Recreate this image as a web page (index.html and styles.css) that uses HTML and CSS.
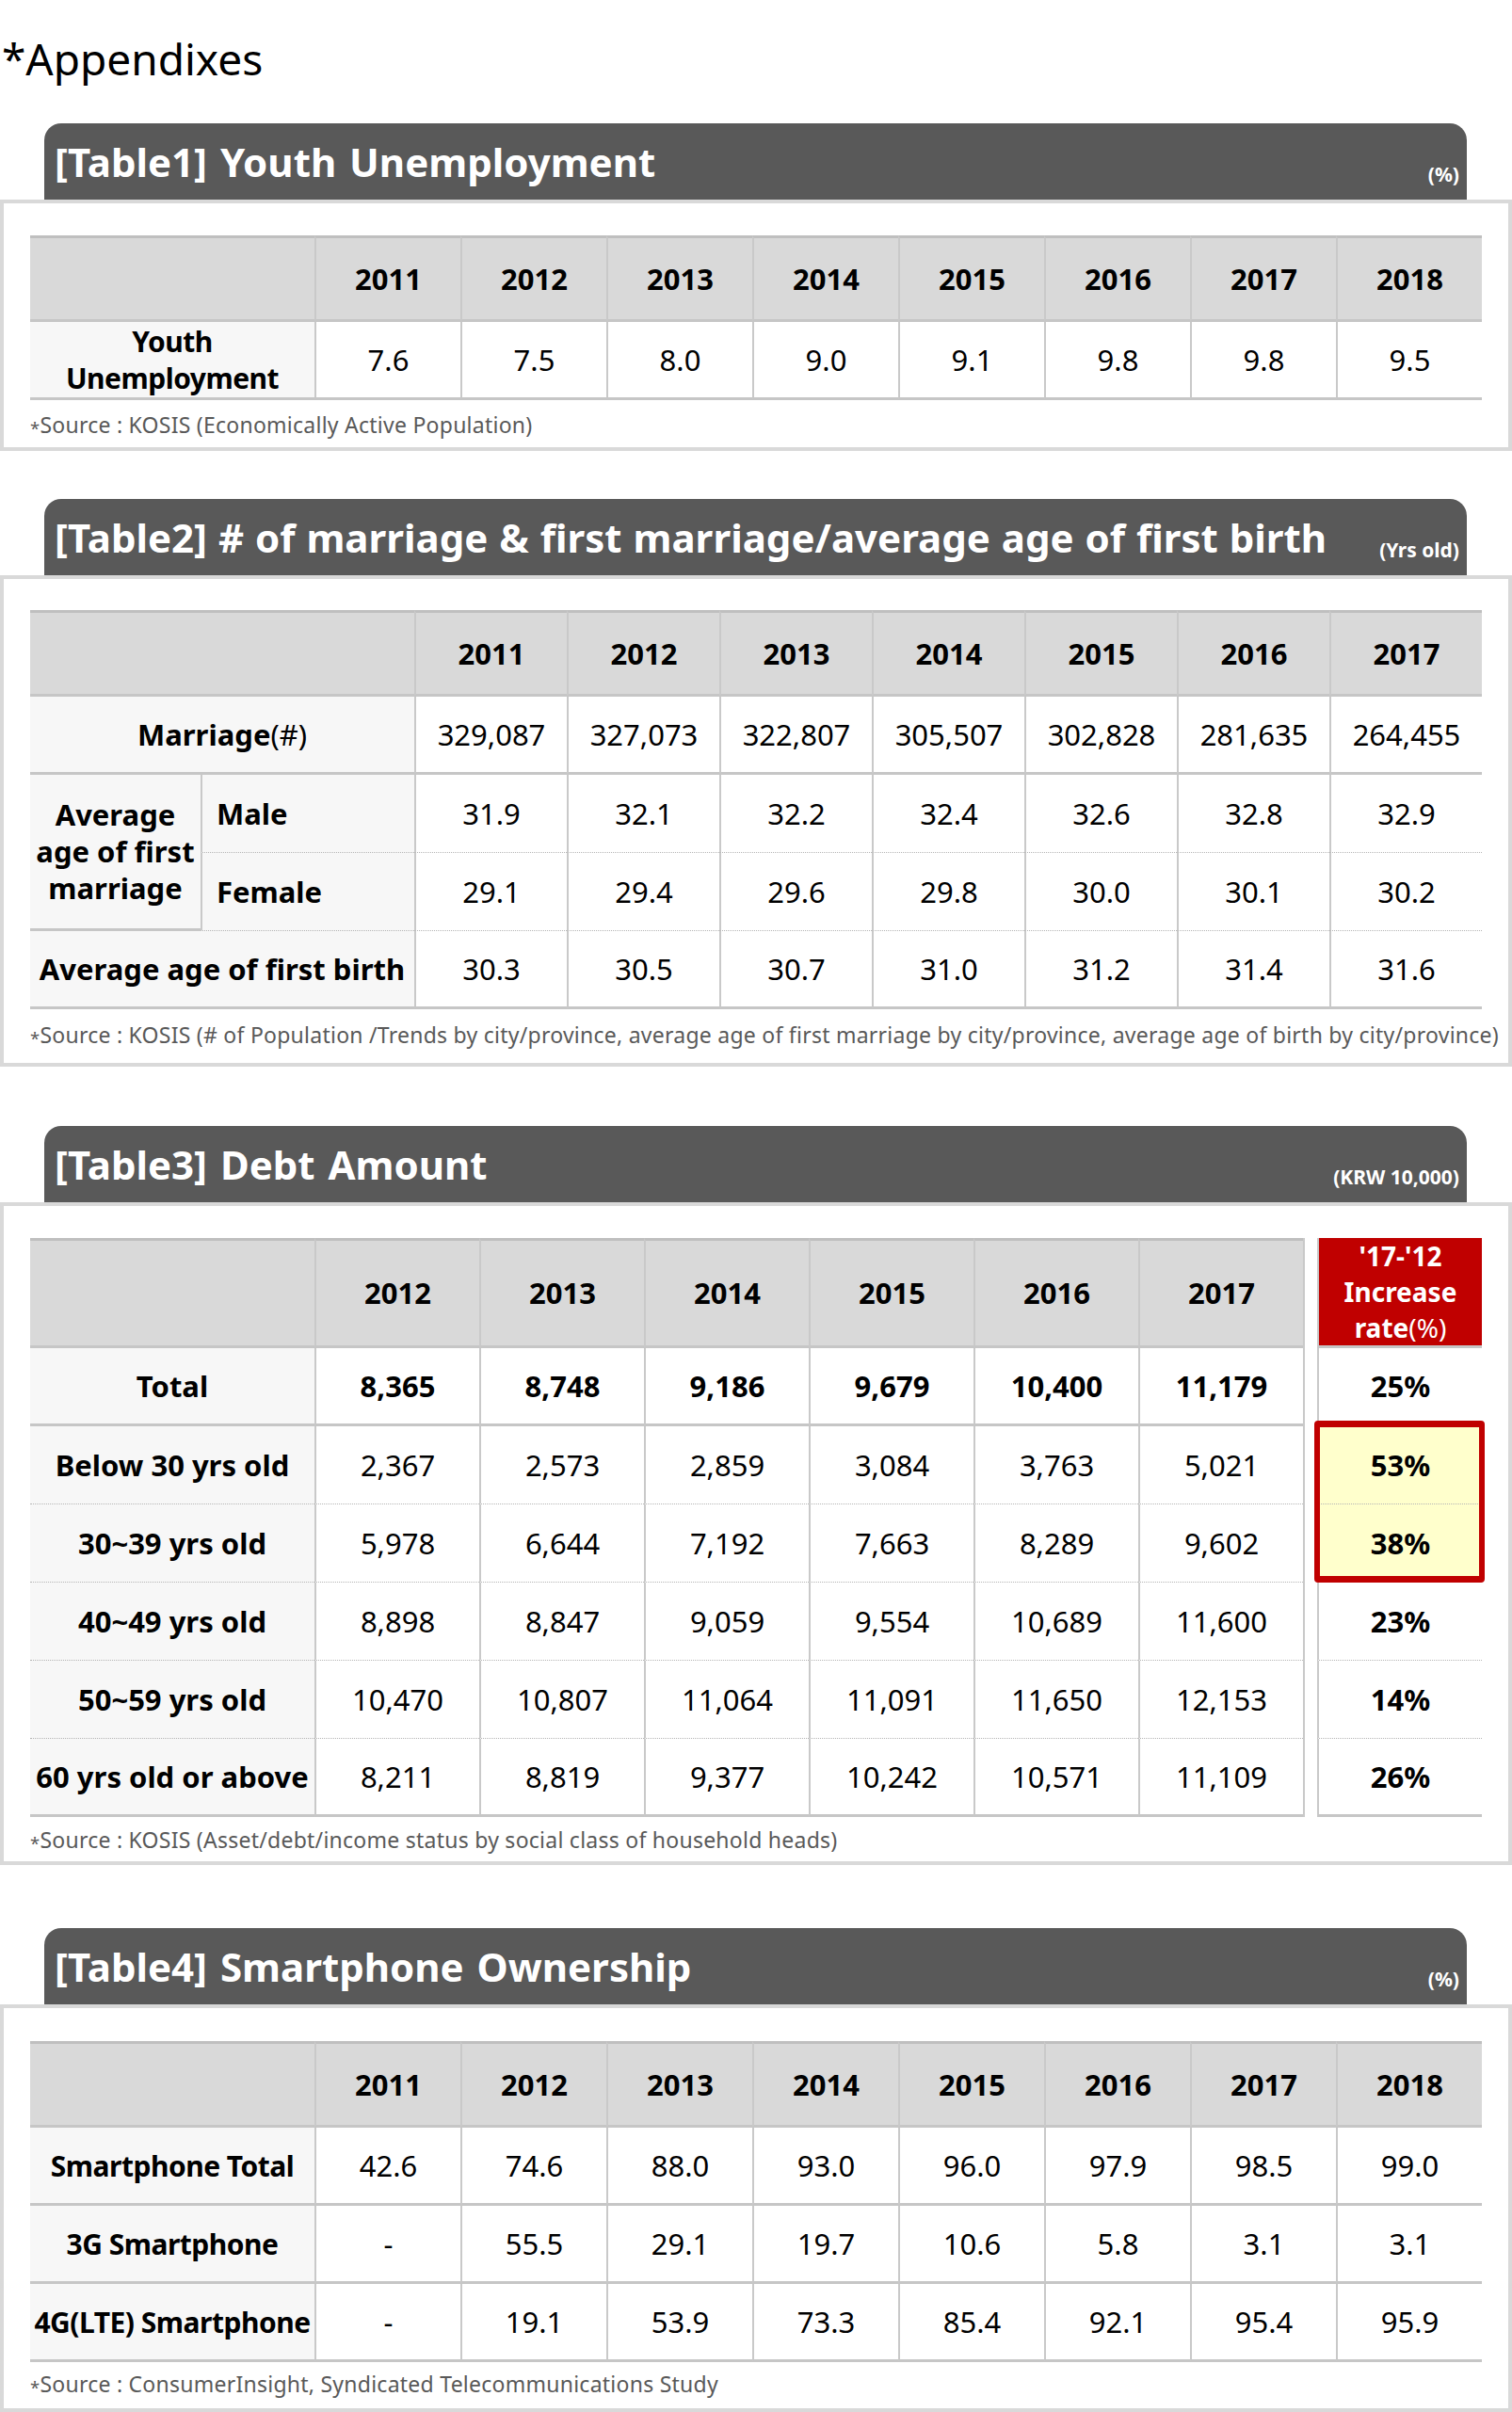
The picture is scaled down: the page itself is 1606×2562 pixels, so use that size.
FILE: index.html
```html
<!DOCTYPE html>
<html lang="en">
<head>
<meta charset="utf-8">
<title>Appendixes</title>
<link rel="stylesheet" href="styles.css">
</head>
<body>
<h1 class="page-title">*Appendixes</h1>

<section class="block block-1">
  <div class="bar"><h2 class="bar-title">[Table1] Youth Unemployment</h2><span class="bar-unit">(%)</span></div>
  <div class="panel">
    <table class="data t-years8">
      <colgroup><col class="c-label"><col class="c-y155"><col class="c-y155"><col class="c-y155"><col class="c-y155"><col class="c-y155"><col class="c-y155"><col class="c-y155"><col class="c-y155"></colgroup>
      <thead>
        <tr class="r-head"><th class="lab"></th><th>2011</th><th>2012</th><th>2013</th><th>2014</th><th>2015</th><th>2016</th><th>2017</th><th>2018</th></tr>
      </thead>
      <tbody>
        <tr class="r-row"><th class="lab narrow">Youth<br>Unemployment</th><td>7.6</td><td>7.5</td><td>8.0</td><td>9.0</td><td>9.1</td><td>9.8</td><td>9.8</td><td>9.5</td></tr>
      </tbody>
    </table>
    <p class="source"><span class="ast">*</span>Source : KOSIS (Economically Active Population)</p>
  </div>
</section>

<section class="block block-2">
  <div class="bar"><h2 class="bar-title">[Table2] # of marriage &amp; first marriage/average age of first birth</h2><span class="bar-unit">(Yrs old)</span></div>
  <div class="panel">
    <table class="data">
      <colgroup><col class="c-grp"><col class="c-sub"><col class="c-y162"><col class="c-y162"><col class="c-y162"><col class="c-y162"><col class="c-y162"><col class="c-y162"><col class="c-y162"></colgroup>
      <thead>
        <tr class="r-head"><th class="lab" colspan="2"></th><th>2011</th><th>2012</th><th>2013</th><th>2014</th><th>2015</th><th>2016</th><th>2017</th></tr>
      </thead>
      <tbody>
        <tr class="r-row"><th class="lab" colspan="2">Marriage<span class="thin">(#)</span></th><td>329,087</td><td>327,073</td><td>322,807</td><td>305,507</td><td>302,828</td><td>281,635</td><td>264,455</td></tr>
        <tr class="r-row dot"><th class="lab grp" rowspan="2">Average age of first marriage</th><th class="sub">Male</th><td>31.9</td><td>32.1</td><td>32.2</td><td>32.4</td><td>32.6</td><td>32.8</td><td>32.9</td></tr>
        <tr class="r-row dot"><th class="sub">Female</th><td>29.1</td><td>29.4</td><td>29.6</td><td>29.8</td><td>30.0</td><td>30.1</td><td>30.2</td></tr>
        <tr class="r-row"><th class="lab" colspan="2">Average age of first birth</th><td>30.3</td><td>30.5</td><td>30.7</td><td>31.0</td><td>31.2</td><td>31.4</td><td>31.6</td></tr>
      </tbody>
    </table>
    <p class="source"><span class="ast">*</span>Source : KOSIS (# of Population /Trends by city/province, average age of first marriage by city/province, average age of birth by city/province)</p>
  </div>
</section>

<section class="block block-3">
  <div class="bar"><h2 class="bar-title">[Table3] Debt Amount</h2><span class="bar-unit">(KRW 10,000)</span></div>
  <div class="panel">
    <table class="data">
      <colgroup><col class="c-label"><col class="c-y175"><col class="c-y175"><col class="c-y175"><col class="c-y175"><col class="c-y175"><col class="c-y175"><col class="c-gap"><col class="c-y175"></colgroup>
      <thead>
        <tr class="r-head-tall"><th class="lab"></th><th>2012</th><th>2013</th><th>2014</th><th>2015</th><th>2016</th><th>2017</th><th class="gap"></th><th class="red-head">'17-'12<br>Increase<br>rate<span class="thin">(%)</span></th></tr>
      </thead>
      <tbody>
        <tr class="r-row"><th class="lab">Total</th><td class="b">8,365</td><td class="b">8,748</td><td class="b">9,186</td><td class="b">9,679</td><td class="b">10,400</td><td class="b">11,179</td><td class="gap"></td><td class="b">25%</td></tr>
        <tr class="r-row dot"><th class="lab">Below 30 yrs old</th><td>2,367</td><td>2,573</td><td>2,859</td><td>3,084</td><td>3,763</td><td>5,021</td><td class="gap"></td><td class="b hl hl-top"><span class="hl-box" aria-hidden="true"></span>53%</td></tr>
        <tr class="r-row dot"><th class="lab">30~39 yrs old</th><td>5,978</td><td>6,644</td><td>7,192</td><td>7,663</td><td>8,289</td><td>9,602</td><td class="gap"></td><td class="b hl">38%</td></tr>
        <tr class="r-row dot"><th class="lab">40~49 yrs old</th><td>8,898</td><td>8,847</td><td>9,059</td><td>9,554</td><td>10,689</td><td>11,600</td><td class="gap"></td><td class="b">23%</td></tr>
        <tr class="r-row dot"><th class="lab">50~59 yrs old</th><td>10,470</td><td>10,807</td><td>11,064</td><td>11,091</td><td>11,650</td><td>12,153</td><td class="gap"></td><td class="b">14%</td></tr>
        <tr class="r-row"><th class="lab">60 yrs old or above</th><td>8,211</td><td>8,819</td><td>9,377</td><td>10,242</td><td>10,571</td><td>11,109</td><td class="gap"></td><td class="b">26%</td></tr>
      </tbody>
    </table>
    <p class="source"><span class="ast">*</span>Source : KOSIS (Asset/debt/income status by social class of household heads)</p>
  </div>
</section>

<section class="block block-4">
  <div class="bar"><h2 class="bar-title">[Table4] Smartphone Ownership</h2><span class="bar-unit">(%)</span></div>
  <div class="panel">
    <table class="data">
      <colgroup><col class="c-label"><col class="c-y155"><col class="c-y155"><col class="c-y155"><col class="c-y155"><col class="c-y155"><col class="c-y155"><col class="c-y155"><col class="c-y155"></colgroup>
      <thead>
        <tr class="r-head"><th class="lab"></th><th>2011</th><th>2012</th><th>2013</th><th>2014</th><th>2015</th><th>2016</th><th>2017</th><th>2018</th></tr>
      </thead>
      <tbody>
        <tr class="r-row"><th class="lab narrow">Smartphone Total</th><td>42.6</td><td>74.6</td><td>88.0</td><td>93.0</td><td>96.0</td><td>97.9</td><td>98.5</td><td>99.0</td></tr>
        <tr class="r-row"><th class="lab narrow">3G Smartphone</th><td>-</td><td>55.5</td><td>29.1</td><td>19.7</td><td>10.6</td><td>5.8</td><td>3.1</td><td>3.1</td></tr>
        <tr class="r-row"><th class="lab narrow">4G(LTE) Smartphone</th><td>-</td><td>19.1</td><td>53.9</td><td>73.3</td><td>85.4</td><td>92.1</td><td>95.4</td><td>95.9</td></tr>
      </tbody>
    </table>
    <p class="source"><span class="ast">*</span>Source : ConsumerInsight, Syndicated Telecommunications Study</p>
  </div>
</section>
</body>
</html>
```

FILE: styles.css
```css
* { box-sizing: border-box; }

body {
  margin: 0;
  background: #fff;
  color: #000;
  font-family: "Noto Sans", "DejaVu Sans", sans-serif;
}

.page-title {
  margin: 34px 0 0 2px;
  font-size: 46px;
  line-height: 56px;
  font-weight: 400;
}

/* section spacing */
.block-1 { margin-top: 41px; }
.block-2 { margin-top: 51px; }
.block-3 { margin-top: 63px; }
.block-4 { margin-top: 67px; }

/* dark title bar */
.bar {
  margin: 0 48px 0 47px;
  height: 81px;
  padding: 0 8px 0 11px;
  background: #595959;
  border-radius: 18px 18px 0 0;
  color: #fff;
  display: flex;
  align-items: baseline;
  justify-content: space-between;
  line-height: 81px;
}
.bar-title {
  margin: 0;
  font-size: 42px;
  font-weight: 700;
  word-spacing: 3px;
  white-space: nowrap;
}
.block-2 .bar-title { word-spacing: 1px; }
.bar-unit {
  align-self: flex-end;
  padding-bottom: 16px;
  font-size: 21px;
  line-height: 21px;
  font-weight: 700;
  white-space: nowrap;
}

/* framed panel */
.panel {
  border: 4px solid #d9d9d9;
  padding: 34px 28px 10px;
}
.block-1 .panel { padding-bottom: 9px; }
.block-2 .panel { padding-top: 33px; padding-bottom: 15px; }
.block-3 .panel { padding-bottom: 8px; }
.block-4 .panel { padding-top: 35px; padding-bottom: 11px; }

/* data tables */
.data {
  width: 1542px;
  table-layout: fixed;
  border-collapse: separate;
  border-spacing: 0;
  font-size: 31px;
  text-align: center;
}
.c-label { width: 302px; }
.c-y155 { width: 155px; }
.c-y162 { width: 162px; }
.c-y175 { width: 175px; }
.c-gap { width: 15px; }
.c-grp { width: 181px; }
.c-sub { width: 227px; }

.r-head { height: 92px; }
.r-head-tall { height: 117px; }
.r-row { height: 83px; }

.data th,
.data td {
  padding: 0;
  vertical-align: middle;
  line-height: 39px;
  border-left: 2px solid #c9c9c9;
  border-bottom: 3px solid #c6c6c6;
  white-space: nowrap;
}
.data td { font-weight: 400; }
.data td.b { font-weight: 700; }
.data thead th {
  background: #d9d9d9;
  border-top: 3px solid #bfbfbf;
  font-weight: 700;
}
.data .lab {
  border-left: 0;
  background: #f7f7f7;
  font-weight: 700;
}
.data thead .lab { background: #d9d9d9; }
.data .lab.narrow { font-size: 30px; letter-spacing: -0.5px; }
.data .grp {
  white-space: normal;
  padding: 0 4px;
  border-bottom: 3px solid #c6c6c6;
}
.data .sub {
  background: #f7f7f7;
  font-weight: 700;
  text-align: left;
  padding-left: 15px;
}
.thin { font-weight: 400; }

/* dotted separators */
.data .dot > td,
.data .dot > th { border-bottom: 1px dotted #b5b5b5; }
.data .dot > .grp { border-bottom: 3px solid #c6c6c6; }

/* gap column & increase column */
.data .gap,
.data .dot > .gap,
.data thead .gap {
  background: #fff;
  border-top: 0;
  border-bottom: 0;
}
.data thead .red-head {
  background: #c00000;
  color: #fff;
  border-top: 0;
  font-size: 28px;
  line-height: 38px;
}
.data .hl { background: #ffffcc; }
.hl-top { position: relative; }
.hl-box {
  position: absolute;
  top: -6px;
  left: -5px;
  width: 181px;
  height: 172px;
  border: 6px solid #c00000;
  border-top-width: 7px;
  border-bottom-width: 7px;
  border-radius: 4px;
  pointer-events: none;
}

/* source line */
.source {
  margin: 10px 0 0;
  font-size: 23px;
  line-height: 30px;
  letter-spacing: 0.25px;
  color: #595959;
  white-space: nowrap;
}
.block-1 .source { margin-top: 11px; }
.block-2 .source { margin-top: 12px; }
.block-3 .source { margin-top: 9px; }
.block-4 .source { margin-top: 8px; }
.ast {
  display: inline-block;
  font-size: 0.8em;
  line-height: 1;
  vertical-align: -0.1em;
}
```
